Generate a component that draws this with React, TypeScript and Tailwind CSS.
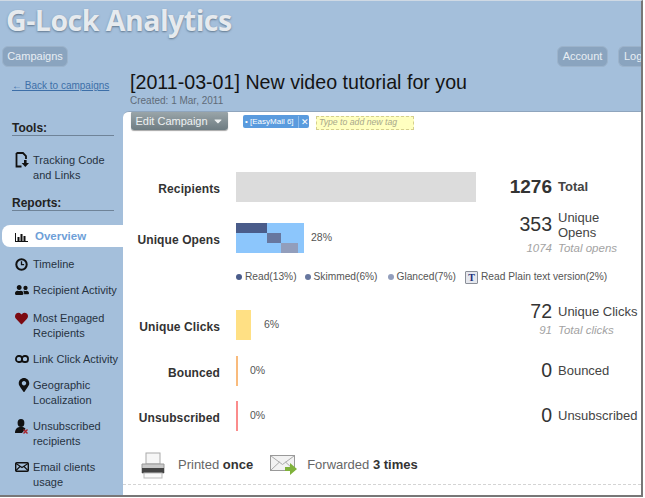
import React from "react";
import { FaUserFriends, FaHeart, FaMapMarkerAlt, FaCaretDown } from "react-icons/fa";

const arial = "font-['Liberation_Sans',Arial,sans-serif]";

function BarsIcon() {
  return (
    <svg width="13" height="9" viewBox="0 0 13 9" fill="#111">
      <rect x="0" y="0" width="1" height="9" />
      <rect x="0" y="8" width="13" height="1" />
      <rect x="2.5" y="4" width="2" height="4" />
      <rect x="5.5" y="1" width="2" height="7" />
      <rect x="8.5" y="3" width="2" height="5" />
    </svg>
  );
}
function DocIcon() {
  return (
    <svg width="15" height="16" viewBox="0 0 15 16" fill="none">
      <path d="M1.5 1h6.5l3 3v3M1.5 1v13.5h5" stroke="#111" strokeWidth="1.8" />
      <path d="M9 8h2.6v3H14l-3.7 4-3.7-4H9z" fill="#111" />
    </svg>
  );
}
function ClockIcon() {
  return (
    <svg width="13" height="13" viewBox="0 0 13 13" fill="none" stroke="#111">
      <circle cx="6.5" cy="6.5" r="5.2" strokeWidth="2" />
      <path d="M6.5 3.2v3.5h2.6" strokeWidth="1.3" />
    </svg>
  );
}
function LinkIcon() {
  return (
    <svg width="14" height="8" viewBox="0 0 14 8" fill="none" stroke="#111" strokeWidth="1.8">
      <rect x="1" y="1" width="6" height="6" rx="2.6" />
      <rect x="7" y="1" width="6" height="6" rx="2.6" />
    </svg>
  );
}
function UserXIcon() {
  return (
    <svg width="13" height="15" viewBox="0 0 13 15">
      <ellipse cx="6" cy="4" rx="3.4" ry="4" fill="#111" />
      <path d="M0 14c0-4 2-5.5 4.5-6h3C9 8.300 10 9 10.500 10L7 14z" fill="#111" />
      <path d="M8.500 10.500l4 4M12.500 10.500l-4 4" stroke="#a8222a" strokeWidth="1.4" />
    </svg>
  );
}
function MailIcon() {
  return (
    <svg width="14" height="10" viewBox="0 0 14 10" fill="none" stroke="#111">
      <rect x="0.700" y="0.700" width="12.600" height="8.600" rx="1" fill="#a4bfdb" strokeWidth="1.400" />
      <path d="M1 1.500l6 4 6-4M1 8.500l4-4M13 8.500l-4-4" strokeWidth="1.100" />
    </svg>
  );
}
function Printer() {
  return (
    <svg width="24" height="27" viewBox="0 0 24 27">
      <rect x="5" y="1" width="14" height="11" fill="#f6f6f6" stroke="#aaa" />
      <path d="M1 12h22v9H1z" fill="#c9c9c9" stroke="#999" />
      <rect x="1" y="16" width="22" height="5" fill="#444" />
      <rect x="3" y="21" width="18" height="5" fill="#fafafa" stroke="#bbb" />
    </svg>
  );
}
function Mail() {
  return (
    <svg width="27" height="20" viewBox="0 0 27 20">
      <rect x="0.500" y="0.500" width="24" height="15" fill="#f2f2f2" stroke="#999" />
      <path d="M1 1l11.500 8.500L24 1M1 15l8.500-8M24 15l-8.500-8" fill="none" stroke="#aaa" />
      <path d="M15 12h5V8l7 6-7 6v-4h-5z" fill="#7fb23a" />
    </svg>
  );
}

function NavItem({ icon, lines, className = "" }: { icon: React.ReactNode; lines: string[]; className?: string }) {
  return (
    <div className={`flex pl-[15px] text-[11px] leading-[15px] tracking-[0.04px] text-[#26323f] ${className}`}>
      <span className="w-[18px] h-[14px] shrink-0 flex items-center">{icon}</span>
      <span>
        {lines.map((l) => (
          <div key={l} className="whitespace-nowrap">{l}</div>
        ))}
      </span>
    </div>
  );
}

function SectionTitle({ children, className = "" }: { children: React.ReactNode; className?: string }) {
  return (
    <div className={`ml-[12px] w-[102px] border-b border-[#6f8398] text-[12px] leading-[13px] font-bold text-[#222] ${className}`}>
      {children}
    </div>
  );
}

function Row({
  label, bar, pct, pctClass = "", num, numClass = "", text, textClass = "", className = "",
}: {
  label: string; bar: React.ReactNode; pct?: string; pctClass?: string; num: string; numClass?: string;
  text: React.ReactNode; textClass?: string; className?: string;
}) {
  return (
    <div className={`flex items-center h-[30px] ${className}`}>
      <div className="w-[97px] pt-[3px] text-right text-[12px] font-bold tracking-[0.1px] text-[#333] whitespace-nowrap">{label}</div>
      <div className="ml-[16px] w-[250px] flex items-center">
        {bar}
        {pct && <span className={`text-[10.5px] text-[#555] ${pctClass}`}>{pct}</span>}
      </div>
      <div className={`w-[66px] text-right text-[#333] ${numClass}`}>{num}</div>
      <div className={`ml-[6px] text-[#444] ${textClass}`}>{text}</div>
    </div>
  );
}

function Sub({ num, text, className = "" }: { num: string; text: string; className?: string }) {
  return (
    <div className={`flex italic text-[11.5px] leading-[14px] text-[#a3a3a3] ${className}`}>
      <div className="ml-[363px] w-[66px] text-right">{num}</div>
      <div className="ml-[6px]">{text}</div>
    </div>
  );
}

function Dot({ color }: { color: string }) {
  return <span className={`inline-block w-[6px] h-[6px] rounded-full mr-[3px] ${color}`} />;
}

export default function App() {
  return (
    <div className={`w-[645px] h-[498px] bg-white overflow-hidden ${arial}`}>
      <div className="w-[643px] h-[497px] bg-[#a4bfdb] border-r-2 border-b-2 border-t border-t-[#cfd9e4] border-[#777] overflow-hidden">
        <header className="h-[110px]">
          <h1 className="h-[40px] pl-[6px] text-[28.5px] leading-[38px] font-bold font-['Open_Sans',sans-serif] tracking-[-0.5px] text-[#e6eaee] [text-shadow:0_1px_2px_rgba(70,90,110,0.7)]">
            G-Lock Analytics
          </h1>
          <nav className="flex items-center justify-between h-[21px] mt-[5px] pl-[2px] text-[11px] text-[#e8eef4]">
            <span className="h-[21px] w-[66px] flex items-center justify-center rounded-[6px] bg-[#8aa4bf] border border-[#9cb3cb]">Campaigns</span>
            <div className="flex">
              <span className="h-[21px] w-[51px] flex items-center justify-center rounded-[6px] bg-[#8aa4bf] border border-[#9cb3cb]">Account</span>
              <span className="h-[21px] w-[23px] ml-[10px] pl-[5px] flex items-center rounded-l-[6px] bg-[#8aa4bf] border border-r-0 border-[#9cb3cb]">Log</span>
            </div>
          </nav>
          <div className="flex mt-[3px]">
            <a className="w-[130px] pl-[12px] pt-[9px] text-[10px] leading-[13px] text-[#3d6fa8] underline whitespace-nowrap">← Back to campaigns</a>
            <div>
              <div className="text-[19.65px] leading-[24px] text-[#141414] whitespace-nowrap">[2011-03-01] New video tutorial for you</div>
              <div className="text-[10px] leading-[12px] mt-[1px] text-[#5f6b78]">Created: 1 Mar, 2011</div>
            </div>
          </div>
        </header>
        <div className="flex h-[385px]">
          <aside className="w-[123px] shrink-0">
            <SectionTitle className="mt-[11px]">Tools:</SectionTitle>
            <NavItem className="mt-[17px]" icon={<DocIcon />} lines={["Tracking Code", "and Links"]} />
            <SectionTitle className="mt-[14px]">Reports:</SectionTitle>
            <div className="mt-[14px] ml-[2px] h-[22px] pt-[2px] bg-white rounded-l-[8px] flex items-center pl-[13px] text-[11.5px]">
              <span className="w-[20px] flex"><BarsIcon /></span>
              <span className="text-[#6f9fd8] font-bold">Overview</span>
            </div>
            <NavItem className="mt-[10px]" icon={<ClockIcon />} lines={["Timeline"]} />
            <NavItem className="mt-[11px]" icon={<FaUserFriends size={14} color="#111" />} lines={["Recipient Activity"]} />
            <NavItem className="mt-[13px] leading-[14px]" icon={<FaHeart size={13} color="#7c0a12" />} lines={["Most Engaged", "Recipients"]} />
            <NavItem className="mt-[11px]" icon={<LinkIcon />} lines={["Link Click Activity"]} />
            <NavItem className="mt-[11px]" icon={<FaMapMarkerAlt size={14} color="#111" className="ml-[2px]" />} lines={["Geographic", "Localization"]} />
            <NavItem className="mt-[11px]" icon={<UserXIcon />} lines={["Unsubscribed", "recipients"]} />
            <NavItem className="mt-[11px]" icon={<MailIcon />} lines={["Email clients", "usage"]} />
          </aside>
          <main className="flex-1 bg-white rounded-tl-[6px] border-t border-[#8fa5bd]">
            <div className="flex items-start h-[20px] pl-[8px]">
              <button className="w-[97px] h-[18px] flex items-center justify-center gap-[4px] rounded-b-[3px] rounded-t-[1px] bg-gradient-to-b from-[#9aa5a9] to-[#6e7c82] text-[11px] text-[#eef1f2] shadow-[0_1px_1px_rgba(0,0,0,0.35)]">
                Edit Campaign <FaCaretDown size={12} />
              </button>
              <span className="ml-[15px] mt-[3px] h-[13px] w-[66px] flex items-center rounded-[2px] bg-[#5a9bde] text-[8px] text-white pl-[2px] whitespace-nowrap">
                <span className="w-[53px]">• [EasyMail 6]</span>
                <span className="border-l border-[#8dbbea] pl-[2px] text-[9px] leading-[12px]">✕</span>
              </span>
              <span className="ml-[7px] mt-[4px] h-[14px] w-[98px] flex items-center pl-[2px] border border-dashed border-[#d5cf8e] bg-[#ffffc0] text-[8.7px] italic text-[#a8a88a] whitespace-nowrap">Type to add new tag</span>
            </div>
            <Row
              className="mt-[40px]"
              label="Recipients"
              bar={<div className="w-[240px] h-[30px] bg-[#dcdcdc]" />}
              num="1276"
              numClass="text-[19px] font-bold"
              text="Total"
              textClass="text-[13px] font-bold"
            />
            <Row
              className="mt-[21px]"
              label="Unique Opens"
              bar={
                <div className="w-[68px] h-[30px] bg-[#8cc6fc] flex items-start">
                  <div className="w-[31px] h-[10px] bg-[#4a5c8a]" />
                  <div className="w-[14px] h-[10px] mt-[10px] bg-[#67779f]" />
                  <div className="w-[17px] h-[10px] mt-[20px] bg-[#929ebc]" />
                </div>
              }
              pct="28%"
              pctClass="ml-[7px]"
              num="353"
              numClass="text-[19.5px] text-[#3a3a3a] mb-[26px]"
              text={<div className="leading-[15px]">Unique<br />Opens</div>}
              textClass="text-[13px] mb-[26px]"
            />
            <Sub num="1074" text="Total opens" className="mt-[-12px]" />
            <div className="flex items-center h-[16px] mt-[14px] ml-[113px] text-[10.2px] text-[#555] whitespace-nowrap">
              <Dot color="bg-[#4a5c8a]" />Read(13%)
              <span className="ml-[8px] flex items-center"><Dot color="bg-[#67779f]" />Skimmed(6%)</span>
              <span className="ml-[10px] flex items-center"><Dot color="bg-[#929ebc]" />Glanced(7%)</span>
              <span className="ml-[9px] mr-[3px] w-[13px] h-[13px] flex items-center justify-center bg-[#e6e8ee] border border-[#8b8f98] rounded-[1px] text-[10px] font-bold font-['Liberation_Serif',serif] text-[#1c2f7a]">T</span>
              Read Plain text version(2%)
            </div>
            <Row
              className="mt-[25px]"
              label="Unique Clicks"
              bar={<div className="w-[15px] h-[30px] bg-[#ffe084]" />}
              pct="6%"
              pctClass="ml-[13px]"
              num="72"
              numClass="text-[19.5px] text-[#3a3a3a] mb-[26px]"
              text="Unique Clicks"
              textClass="text-[13px] whitespace-nowrap mb-[26px]"
            />
            <Sub num="91" text="Total clicks" className="mt-[-17px]" />
            <Row
              className="mt-[19px]"
              label="Bounced"
              bar={<div className="w-[2px] h-[30px] bg-[#f9bb7c]" />}
              pct="0%"
              pctClass="ml-[12px]"
              num="0"
              numClass="text-[19.5px] text-[#3a3a3a]"
              text="Bounced"
              textClass="text-[13px]"
            />
            <Row
              className="mt-[15px]"
              label="Unsubscribed"
              bar={<div className="w-[2px] h-[30px] bg-[#fb8c8c]" />}
              pct="0%"
              pctClass="ml-[12px]"
              num="0"
              numClass="text-[19.5px] text-[#3a3a3a]"
              text="Unsubscribed"
              textClass="text-[13px] whitespace-nowrap"
            />
            <div className="flex items-center h-[28px] mt-[20px] pl-[18px] text-[13px] text-[#666]">
              <Printer />
              <span className="ml-[13px]">Printed <b className="text-[#333]">once</b></span>
              <span className="ml-[17px]"><Mail /></span>
              <span className="ml-[10px]">Forwarded <b className="text-[#333]">3 times</b></span>
            </div>
            <div className="mt-[5px] border-t border-dashed border-[#d4d4d4]" />
          </main>
        </div>
      </div>
    </div>
  );
}
